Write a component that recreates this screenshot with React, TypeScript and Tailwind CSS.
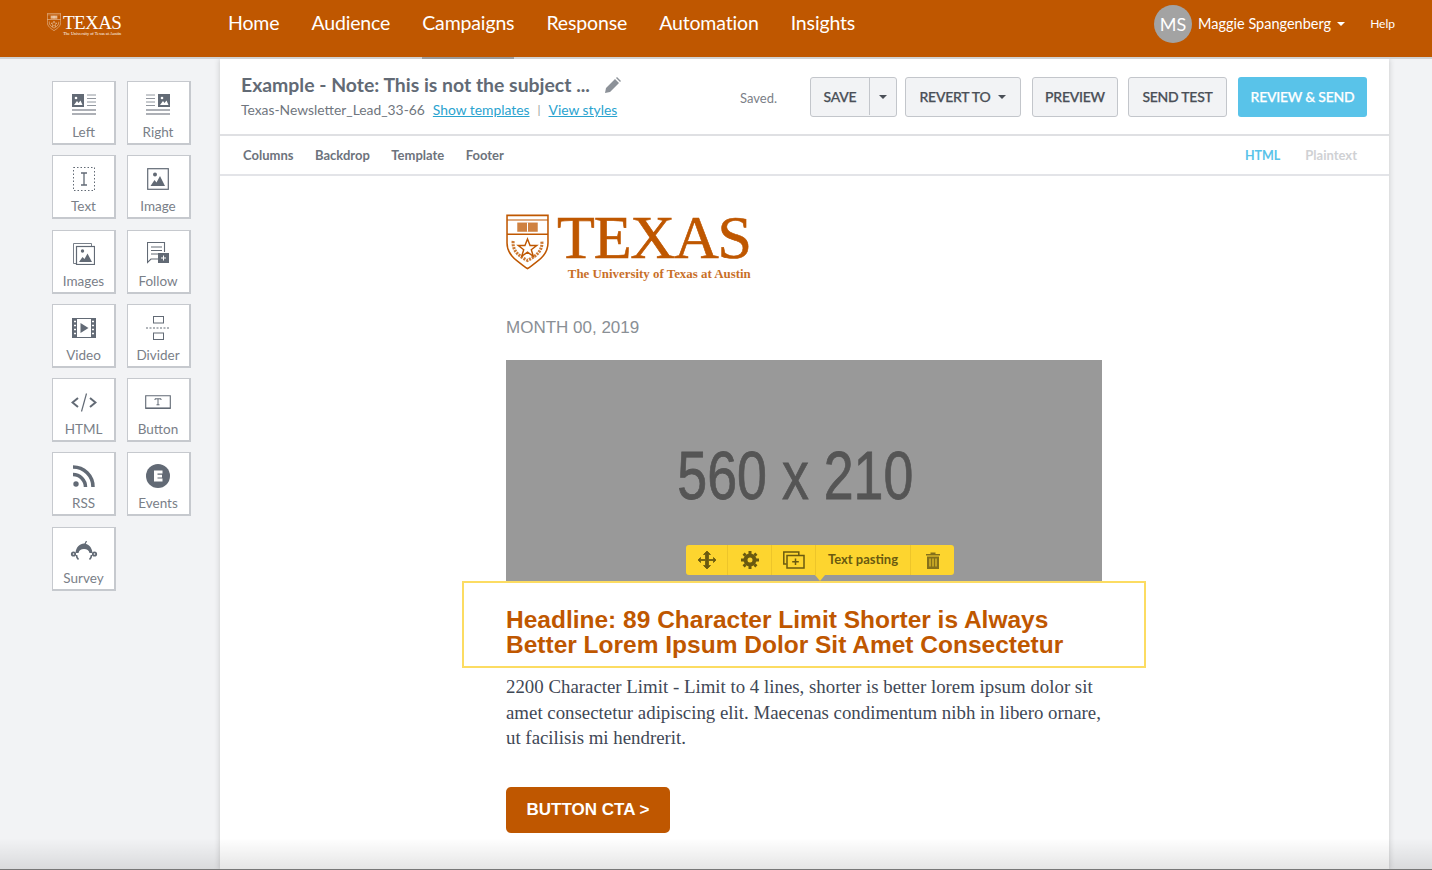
import type { ReactNode } from "react";

const gray = "#626a75";

const icons: Record<string, ReactNode> = {
  Left: (
    <svg width="24" height="22" viewBox="0 0 24 22" fill="none" stroke={gray}>
      <rect x="0" y="0" width="12" height="13" fill={gray} stroke="none" />
      <circle cx="4" cy="4" r="1.3" fill="#fff" stroke="none" />
      <path d="M2 11l3-4 1.500 2 2-2.500 2 4.500z" fill="#fff" stroke="none" />
      <path d="M15 1h9M15 4.500h9M15 8h9M15 11.500h9" opacity=".7" />
      <path d="M0 16h24M0 20h24" strokeWidth="1.300" opacity=".7" />
    </svg>
  ),
  Right: (
    <svg width="24" height="22" viewBox="0 0 24 22" fill="none" stroke={gray}>
      <rect x="12" y="0" width="12" height="13" fill={gray} stroke="none" />
      <circle cx="16" cy="4" r="1.3" fill="#fff" stroke="none" />
      <path d="M14 11l3-4 1.500 2 2-2.500 2 4.500z" fill="#fff" stroke="none" />
      <path d="M0 1h9M0 4.500h9M0 8h9M0 11.500h9" opacity=".7" />
      <path d="M0 16h24M0 20h24" strokeWidth="1.300" opacity=".7" />
    </svg>
  ),
  Text: (
    <svg width="22" height="24" viewBox="0 0 22 24" fill="none" stroke={gray}>
      <rect x=".5" y=".5" width="21" height="23" strokeDasharray="1.500 2" />
      <path d="M8 6h6M8 18h6M11 6v12" strokeWidth="1.300" />
    </svg>
  ),
  Image: (
    <svg width="22" height="22" viewBox="0 0 22 22" fill="none" style={{ color: gray }}>
      <rect x=".7" y=".7" width="20.600" height="20.600" stroke="currentColor" strokeWidth="1.200" />
      <circle cx="8" cy="6.500" r="2" fill="currentColor" />
      <path d="M3.500 18l4-6 2 2.500 3.500-6.500 5 10z" fill="currentColor" />
    </svg>
  ),
  Images: (
    <svg width="22" height="22" viewBox="0 0 22 22" fill="none" stroke={gray}>
      <path d="M3 20.500H.5V.5h18V3" opacity=".85" />
      <rect x="3.500" y="3.500" width="18" height="18" strokeWidth="1.200" />
      <circle cx="9.500" cy="8" r="1.700" fill={gray} stroke="none" />
      <path d="M6 19l3.500-5 2 2 3-5.500 4.500 8.500z" fill={gray} stroke="none" />
    </svg>
  ),
  Follow: (
    <svg width="22" height="23" viewBox="0 0 22 23" fill="none" stroke={gray}>
      <path d="M12 17H4l-3.500 3.500V.5h17V10" strokeWidth="1.100" />
      <path d="M4 5h11M4 8.500h11M4 12h7" />
      <rect x="11" y="11" width="11" height="10" fill={gray} stroke="none" />
      <path d="M16.500 13.500v5M14 16h5" stroke="#fff" />
    </svg>
  ),
  Video: (
    <svg width="24" height="20" viewBox="0 0 24 20" fill="none" stroke={gray}>
      <rect x=".5" y=".5" width="23" height="19" />
      <rect x="1" y="1" width="4" height="18" fill={gray} stroke="none" />
      <rect x="19" y="1" width="4" height="18" fill={gray} stroke="none" />
      <path d="M2 3.500h2M2 7.500h2M2 11.500h2M2 15.500h2M20 3.500h2M20 7.500h2M20 11.500h2M20 15.500h2" stroke="#fff" strokeWidth="1.500" />
      <path d="M8.500 5l8 5-8 5z" fill={gray} stroke="none" />
    </svg>
  ),
  Divider: (
    <svg width="24" height="24" viewBox="0 0 24 24" fill="none" stroke={gray}>
      <rect x="7.500" y=".5" width="10" height="6.500" />
      <path d="M0 12h24" strokeDasharray="2 1.500" />
      <rect x="7.500" y="17" width="10" height="6.500" />
    </svg>
  ),
  HTML: (
    <svg width="26" height="19" viewBox="0 0 26 19" fill="none" stroke={gray}>
      <path d="M7 5L1.500 9.500 7 14M19 5l5.500 4.500L19 14" strokeWidth="2" />
      <path d="M15.500 .5l-5 18" strokeWidth="1.200" />
    </svg>
  ),
  Button: (
    <svg width="26" height="14" viewBox="0 0 26 14" fill="none" stroke={gray}>
      <path d="M.7 13.200V.7h24.600v12.500z" strokeWidth="1.100" />
      <path d="M.5 13.300h25" strokeWidth="1.500" />
      <path d="M10 5V3.800h6V5M13 3.800v6M11.500 9.800h3" />
    </svg>
  ),
  RSS: (
    <svg width="22" height="22" viewBox="0 0 22 22" fill="none" stroke={gray}>
      <circle cx="3" cy="19" r="2.700" fill={gray} stroke="none" />
      <path d="M0 9.500a12.500 12.500 0 0 1 12.500 12.500" strokeWidth="3.500" />
      <path d="M0 2a20 20 0 0 1 20 20" strokeWidth="3.500" />
    </svg>
  ),
  Events: (
    <svg width="24" height="24" viewBox="0 0 24 24">
      <circle cx="12" cy="12" r="12" fill={gray} />
      <path d="M8 6.500h8.500v3h-5v1.200h4.500v2.700h-4.500v1.200h5v3H8z" fill="#fff" />
    </svg>
  ),
  Survey: (
    <svg width="28" height="20" viewBox="0 0 28 20" fill="none">
      <path d="M16.500 0l-2 4" stroke={gray} strokeWidth="1.200" />
      <path d="M5.500 12C6 6 10 2.500 14 2.500S22 6 22.500 12h-3C19 9.500 17 8 14 8s-5 1.500-5.500 4z" fill={gray} />
      <circle cx="3.500" cy="13" r="2.600" fill={gray} />
      <circle cx="24.500" cy="13" r="2.600" fill={gray} />
      <circle cx="3.500" cy="13" r=".8" fill="#fff" />
      <circle cx="24.500" cy="13" r=".8" fill="#fff" />
      <path d="M6.500 14c0 2 1 3.500 2 4.500M21.500 14c0 2-1 3.500-2 4.500" stroke={gray} strokeWidth="1.600" />
    </svg>
  ),
};

const tiles = ["Left", "Right", "Text", "Image", "Images", "Follow", "Video", "Divider", "HTML", "Button", "RSS", "Events", "Survey"];

function Tile({ name }: { name: string }) {
  return (
    <div className="w-[64px] h-[64px] bg-white border border-[#c6c9ce] border-b-2 border-r-2 flex flex-col items-center text-[13.5px] text-[#7a8088]">
      <div className="h-[41px] flex items-center justify-center pt-[5px]">{icons[name]}</div>
      <div className="leading-[16px] mt-[1px]">{name}</div>
    </div>
  );
}

function Shield({ color, width, height }: { color: string; width: number; height: number }) {
  return (
    <svg width={width} height={height} viewBox="0 0 42 54" fill="none">
      <path d="M1 1h40v27c0 13-12 19-20 25C13 47 1 41 1 28z" stroke={color} strokeWidth="1.500" />
      <path d="M1 5.500h40" stroke={color} strokeWidth="1" />
      <rect x="11" y="8" width="20" height="9" fill={color} opacity=".75" />
      <path d="M21 8v9" stroke="#fff" />
      <path d="M1 19.500h40" stroke={color} strokeWidth="1.500" />
      <path d="M21 24l2.500 6.500H30l-5.300 4 2 6.500-5.700-4-5.700 4 2-6.500-5.300-4h6.500z" stroke={color} strokeWidth="1.400" />
      <path d="M7 26c-1 10 6 15 14 19 8-4 15-9 14-19" stroke={color} strokeWidth="3" strokeDasharray="2 1" opacity=".8" />
    </svg>
  );
}

function HeaderBar() {
  const nav = ["Home", "Audience", "Campaigns", "Response", "Automation", "Insights"];
  return (
    <header className="h-[59px] shrink-0 bg-[#bf5700] border-b-2 border-[#d0d2d4] flex items-start text-white relative">
      <div className="w-[228px] pl-[47px] pt-[13px] flex items-start gap-[2px]">
        <Shield color="#f3dcc6" width={14} height={18} />
        <div className="flex flex-col items-end" style={{ fontFamily: '"Liberation Serif", serif' }}>
          <div className="text-[19px] leading-[19px] tracking-[-0.6px]">TEXAS</div>
          <div className="text-[4.300px] leading-[4px] whitespace-nowrap">The University of Texas at Austin</div>
        </div>
      </div>
      <nav className="flex gap-[32px] text-[19.500px] leading-[24px] pt-[11px] tracking-[-0.15px]">
        {nav.map((item) => (
          <a key={item} className="relative h-[46px] whitespace-nowrap">
            {item}
            {item === "Campaigns" && <span className="absolute left-0 right-0 bottom-0 h-[2px] translate-y-[2px] bg-[#9a9a9a]" />}
          </a>
        ))}
      </nav>
      <div className="ml-auto flex items-center pt-[5px] pr-[37px]">
        <div className="w-[38px] h-[38px] rounded-full bg-[#a3a3a3] text-[18px] flex items-center justify-center">MS</div>
        <span className="ml-[6px] text-[14.500px] whitespace-nowrap">Maggie Spangenberg</span>
        <span className="ml-[6px] mb-[1px] w-0 h-0 border-x-[4.500px] border-x-transparent border-t-[4px] border-t-white" />
        <span className="ml-[25px] text-[12px]">Help</span>
      </div>
    </header>
  );
}

function Btn({ children, className = "" }: { children: ReactNode; className?: string }) {
  return (
    <button className={`h-[40px] pb-[1px] bg-[#f2f3f5] border border-[#c3c6cb] rounded-[3px] text-[14px] tracking-[-0.25px] font-medium [-webkit-text-stroke:0.25px_#4a4f57] text-[#4a4f57] whitespace-nowrap flex items-center justify-center ${className}`}>
      {children}
    </button>
  );
}

function Caret() {
  return <span className="w-0 h-0 border-x-[4px] border-x-transparent border-t-[4px] border-t-[#4a4f57]" />;
}

function EditorHead() {
  return (
    <div className="h-[77px] shrink-0 border-b-2 border-[#dfe0e3] flex items-start pl-[21px] pr-[22px]">
      <div className="pt-[13px] w-[499px]">
        <div className="flex items-center text-[19.400px] leading-[26px] font-bold text-[#626a75] whitespace-nowrap">
          Example - Note: This is not the subject ...
          <svg className="ml-[14px]" width="17" height="17" viewBox="0 0 17 17" fill="#8c9198">
            <path d="M1 16l1-5L11 2l4 4-9 9zM12 1l1-1 4 4-1 1z" />
          </svg>
        </div>
        <div className="mt-[2px] text-[13.850px] leading-[20px] text-[#70767e] whitespace-nowrap flex items-center">
          Texas-Newsletter_Lead_33-66
          <a className="ml-[8px] text-[#2aa3cf] underline">Show templates</a>
          <span className="mx-[8px] text-[#999] text-[12px]">|</span>
          <a className="text-[#2aa3cf] underline">View styles</a>
        </div>
      </div>
      <div className="w-[70px] pt-[31px] text-[13px] leading-[16px] text-[#7b8087]">Saved.</div>
      <div className="flex pt-[18px]">
        <div className="flex h-[40px] w-[87px] pb-[1px] bg-[#f2f3f5] border border-[#c3c6cb] rounded-[3px] text-[14px] tracking-[-0.25px] font-medium [-webkit-text-stroke:0.25px_#4a4f57] text-[#4a4f57]">
          <span className="w-[59px] flex items-center justify-center border-r border-[#c3c6cb]">SAVE</span>
          <span className="flex-1 flex items-center justify-center"><Caret /></span>
        </div>
        <Btn className="ml-[8px] w-[116px] gap-[8px]">REVERT TO <Caret /></Btn>
        <Btn className="ml-[11px] w-[86px]">PREVIEW</Btn>
        <Btn className="ml-[10px] w-[99px]">SEND TEST</Btn>
        <button className="ml-[11px] w-[129px] h-[40px] pb-[1px] bg-[#59c3e9] rounded-[3px] text-white text-[14px] tracking-[-0.25px] font-medium [-webkit-text-stroke:0.25px_#ffffff] whitespace-nowrap">REVIEW &amp; SEND</button>
      </div>
    </div>
  );
}

function TabsRow() {
  return (
    <div className="h-[40px] shrink-0 border-b-2 border-[#e3e4e8] flex items-center pl-[23px] pr-[32px] text-[13px] font-bold text-[#6d737c]">
      <div className="flex gap-[21.500px] pt-[1px]">
        <span>Columns</span>
        <span>Backdrop</span>
        <span>Template</span>
        <span>Footer</span>
      </div>
      <div className="ml-auto flex items-baseline gap-[25px] pt-[1px]">
        <span className="text-[12.500px] text-[#59c3e9]">HTML</span>
        <span className="text-[#cfd1d4]">Plaintext</span>
      </div>
    </div>
  );
}

function BlockToolbar() {
  return (
    <div className="absolute left-[180px] bottom-[6px] h-[30px] flex bg-[#fdd52f] rounded-[3px] text-[#6a5a10]" style={{ fontFamily: "Lato, sans-serif" }}>
      <div className="w-[42px] flex items-center justify-center border-r border-[#edc52a]">
        <svg width="18" height="18" viewBox="0 0 18 18" fill="#6a5a10">
          <path d="M9 0l3.500 3.500h-2v5h5v-2L18 9l-2.500 2.500v-2h-5v5h2L9 18l-3.500-3.500h2v-5h-5v2L0 9l2.500-2.500v2h5v-5h-2z" stroke="#6a5a10" strokeWidth=".8" />
        </svg>
      </div>
      <div className="w-[44px] flex items-center justify-center border-r border-[#edc52a]">
        <svg width="18" height="18" viewBox="0 0 18 18" fill="none" stroke="#6a5a10">
          <circle cx="9" cy="9" r="4.500" strokeWidth="4" />
          <path d="M9 0v3M9 15v3M0 9h3M15 9h3M2.600 2.600l2 2M13.400 13.400l2 2M2.600 15.400l2-2M13.400 4.600l2-2" strokeWidth="3" />
        </svg>
      </div>
      <div className="w-[44px] flex items-center justify-center border-r border-[#edc52a]">
        <svg width="22" height="18" viewBox="0 0 22 18" fill="none" stroke="#6a5a10" strokeWidth="1.500">
          <path d="M3.500 13H.8V1h15v3" />
          <rect x="4" y="4.500" width="17" height="12.500" />
          <path d="M12.500 7.500v6.500M9.200 10.700h6.600" />
        </svg>
      </div>
      <div className="w-[95px] flex items-center justify-center border-r border-[#edc52a] text-[13px] font-bold">Text pasting</div>
      <div className="w-[43px] flex items-center justify-center">
        <svg width="14" height="17" viewBox="0 0 14 17" fill="#85701a">
          <path d="M0 2h4.500V.5h5V2H14v1.500H0zM1 4.500h12V17H1z" />
          <path d="M4 6.500v8M7 6.500v8M10 6.500v8" stroke="#fdd52f" />
        </svg>
      </div>
      <span className="absolute left-[129px] top-full w-0 h-0 border-x-[5px] border-x-transparent border-t-[6px] border-t-[#fdd52f]" />
    </div>
  );
}

function EmailBody() {
  return (
    <div className="w-[596px] ml-[286px]">
      <div className="pt-[38px] flex items-start h-[140px]">
        <Shield color="#bf5700" width={43} height={56} />
        <div className="ml-[8px] flex flex-col items-end text-[#bf5700]" style={{ fontFamily: '"Liberation Serif", serif' }}>
          <div className="text-[62px] leading-[50px] -mt-[2px] tracking-[-1.2px] [-webkit-text-stroke:0.6px_#bf5700]">TEXAS</div>
          <div className="text-[12.900px] leading-[14px] mt-[5px] font-bold whitespace-nowrap opacity-85">The University of Texas at Austin</div>
        </div>
      </div>
      <div className="h-[44px] text-[17px] leading-[24px] text-[#8a8f95]" style={{ fontFamily: '"Liberation Sans", sans-serif' }}>MONTH 00, 2019</div>
      <div className="relative h-[221px] bg-[#999999] flex items-center justify-center" style={{ fontFamily: '"Liberation Sans", sans-serif' }}>
        <span className="text-[68px] leading-none text-[#555555] -ml-[17px] mt-[8px] whitespace-nowrap [-webkit-text-stroke:0.8px_#555555]" style={{ transform: "scaleX(0.79)" }}>560 x 210</span>
        <BlockToolbar />
      </div>
      <div className="-mx-[44px] h-[87px] border-2 border-[#fcdc62] pl-[42px] pt-[25px]" style={{ fontFamily: '"Liberation Sans", sans-serif' }}>
        <h1 className="text-[24.500px] leading-[24.500px] font-bold text-[#bf5700] whitespace-nowrap">
          Headline: 89 Character Limit Shorter is Always<br />Better Lorem Ipsum Dolor Sit Amet Consectetur
        </h1>
      </div>
      <p className="mt-[6px] text-[18.850px] leading-[25.500px] text-[#3f4856] whitespace-nowrap" style={{ fontFamily: '"Liberation Serif", serif' }}>
        2200 Character Limit - Limit to 4 lines, shorter is better lorem ipsum dolor sit<br />
        amet consectetur adipiscing elit. Maecenas condimentum nibh in libero ornare,<br />
        ut facilisis mi hendrerit.
      </p>
      <button className="mt-[36px] w-[164px] h-[46px] pt-[1px] bg-[#bf5700] rounded-[5px] text-white text-[17px] font-bold" style={{ fontFamily: '"Liberation Sans", sans-serif' }}>BUTTON CTA &gt;</button>
    </div>
  );
}

export default function App() {
  return (
    <div className="h-[870px] overflow-hidden flex flex-col bg-[#f2f3f5] relative" style={{ fontFamily: 'Lato, "Open Sans", sans-serif' }}>
      <HeaderBar />
      <div className="flex-1 flex min-h-0">
        <aside className="w-[220px] shrink-0 pl-[52px] pt-[22px]">
          <div className="grid grid-cols-[64px_64px] gap-x-[10.500px] gap-y-[10.300px]">
            {tiles.map((name) => <Tile key={name} name={name} />)}
          </div>
        </aside>
        <main className="w-[1169px] shrink-0 bg-white flex flex-col shadow-[0_0_6px_rgba(0,0,0,0.18)]">
          <EditorHead />
          <TabsRow />
          <EmailBody />
        </main>
      </div>
      <div className="absolute left-0 right-0 bottom-0 h-[32px] bg-gradient-to-b from-transparent to-black/10 border-b border-[#777]" />
    </div>
  );
}
